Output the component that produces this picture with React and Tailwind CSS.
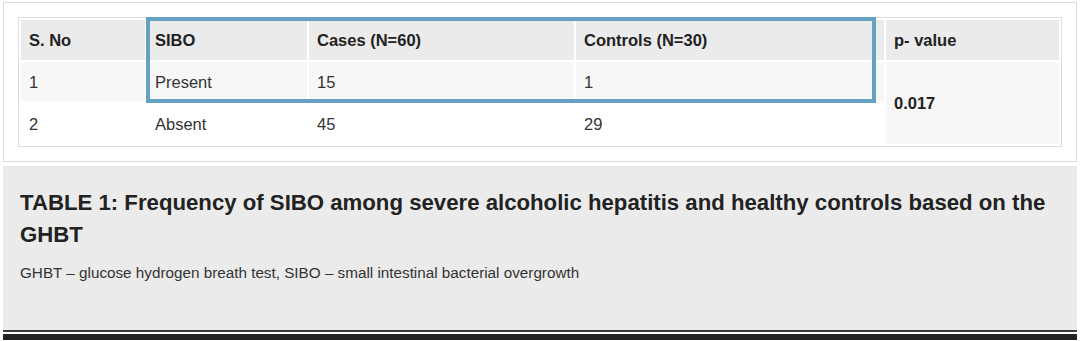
import React from "react";

const headers = [
  { label: "S. No", w: "w-[124px]" },
  { label: "SIBO", w: "w-[160px]" },
  { label: "Cases (N=60)", w: "w-[265px]" },
  { label: "Controls (N=30)", w: "w-[308px]" },
  { label: "p- value", w: "w-[173px]" },
];

const rows = [
  ["1", "Present", "15", "1"],
  ["2", "Absent", "45", "29"],
];

export default function App() {
  return (
    <div className="w-[1080px] h-[341px] overflow-hidden bg-white px-[3px] pt-[2px] font-['Liberation_Sans',Arial,sans-serif] text-[#222]">
      {/* table card */}
      <div className="border border-[#dddddd] p-[14px]">
        <div className="relative">
          <table className="w-full table-fixed border-separate border-spacing-[2px] border border-[#dddddd] text-[16.5px]">
            <thead>
              <tr className="h-[40px]">
                {headers.map((h) => (
                  <th
                    key={h.label}
                    className={`${h.w} bg-[#ebebeb] pl-[8px] text-left font-bold`}
                  >
                    {h.label}
                  </th>
                ))}
              </tr>
            </thead>
            <tbody>
              {rows.map((r, i) => (
                <tr key={i} className={`h-[40px] ${i === 0 ? "bg-[#f7f7f7]" : "bg-white"}`}>
                  {r.map((c, j) => (
                    <td key={j} className="pl-[8px] text-[#333]">
                      {c}
                    </td>
                  ))}
                  {i === 0 && (
                    <td rowSpan={2} className="bg-[#f7f7f7] pl-[8px] font-bold">
                      0.017
                    </td>
                  )}
                </tr>
              ))}
            </tbody>
          </table>
          {/* highlight box */}
          <div className="absolute left-[128px] top-0 w-[730px] h-[86px] border-[4px] border-[#64a2c0] pointer-events-none" />
        </div>
      </div>

      {/* caption */}
      <div className="mt-[4px] h-[166px] bg-[#ebebeb] px-[17px] pt-[21px] border-b-2 border-[#3a3a3a]">
        <h2 className="text-[22.2px] leading-[32px] font-bold text-[#222]">
          TABLE 1: Frequency of SIBO among severe alcoholic hepatitis and healthy controls based on the GHBT
        </h2>
        <p className="mt-[12px] text-[15.25px] leading-[20px] text-[#333]">
          GHBT – glucose hydrogen breath test, SIBO – small intestinal bacterial overgrowth
        </p>
      </div>
      <div className="mt-[2px] h-[6px] bg-[#222]" />
    </div>
  );
}
